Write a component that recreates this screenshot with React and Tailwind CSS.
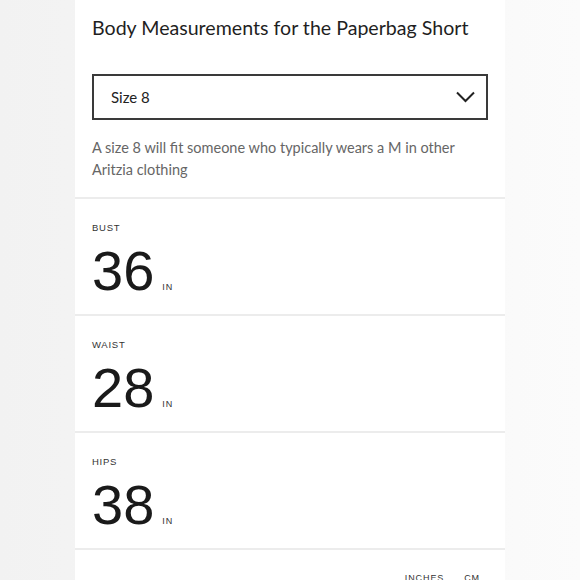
import React from 'react';

const rows = [
  { label: 'BUST', value: 36 },
  { label: 'WAIST', value: 28 },
  { label: 'HIPS', value: 38 },
];

const App = () => {
  return (
    <div className="w-full h-[580px] overflow-hidden bg-gradient-to-r from-[#f2f2f2] to-[#fbfbfb] flex justify-center">
      <div className="w-[430px] shrink-0 bg-white">
        {/* header + size select */}
        <div className="px-[17px] pt-[14px] pb-[16px] font-['Lato',sans-serif]">
          <h1 className="text-[19.6px] leading-[28px] text-[#1f1f1f]">Body Measurements for the Paperbag Short</h1>
          <div className="mt-[32px] h-[46px] border-2 border-[#3a3a3a] flex items-center justify-between pl-[17px] pr-[11px]">
            <span className="text-[15px] text-[#222]">Size 8</span>
            <svg width="19" height="12" viewBox="0 0 19 12" fill="none">
              <path d="M1 1.5 L9.5 10 L18 1.5" stroke="#222" strokeWidth="2" />
            </svg>
          </div>
          <p className="mt-[17px] text-[14.5px] leading-[22px] text-[#666]">
            A size 8 will fit someone who typically wears a M in other Aritzia clothing
          </p>
        </div>

        {rows.map(r => (
          <div key={r.label} className="border-t-2 border-[#ececec] h-[117px] px-[17px] pt-[23px] font-['Liberation_Sans',sans-serif]">
            <div className="text-[9.5px] leading-[12px] tracking-[0.08em] text-[#333]">{r.label}</div>
            <div className="mt-[9px] flex items-baseline gap-[8px]">
              <span className="text-[56px] leading-[56px] text-[#1a1a1a]">{r.value}</span>
              <span className="text-[9px] tracking-[0.1em] text-[#333]">IN</span>
            </div>
          </div>
        ))}

        <div className="border-t-2 border-[#ececec] flex justify-end gap-[20px] pr-[25px] pt-[22px] font-['Liberation_Sans',sans-serif] text-[9px] tracking-[0.1em] text-[#333]">
          <span>INCHES</span>
          <span>CM</span>
        </div>
      </div>
    </div>
  );
};

export default App;
